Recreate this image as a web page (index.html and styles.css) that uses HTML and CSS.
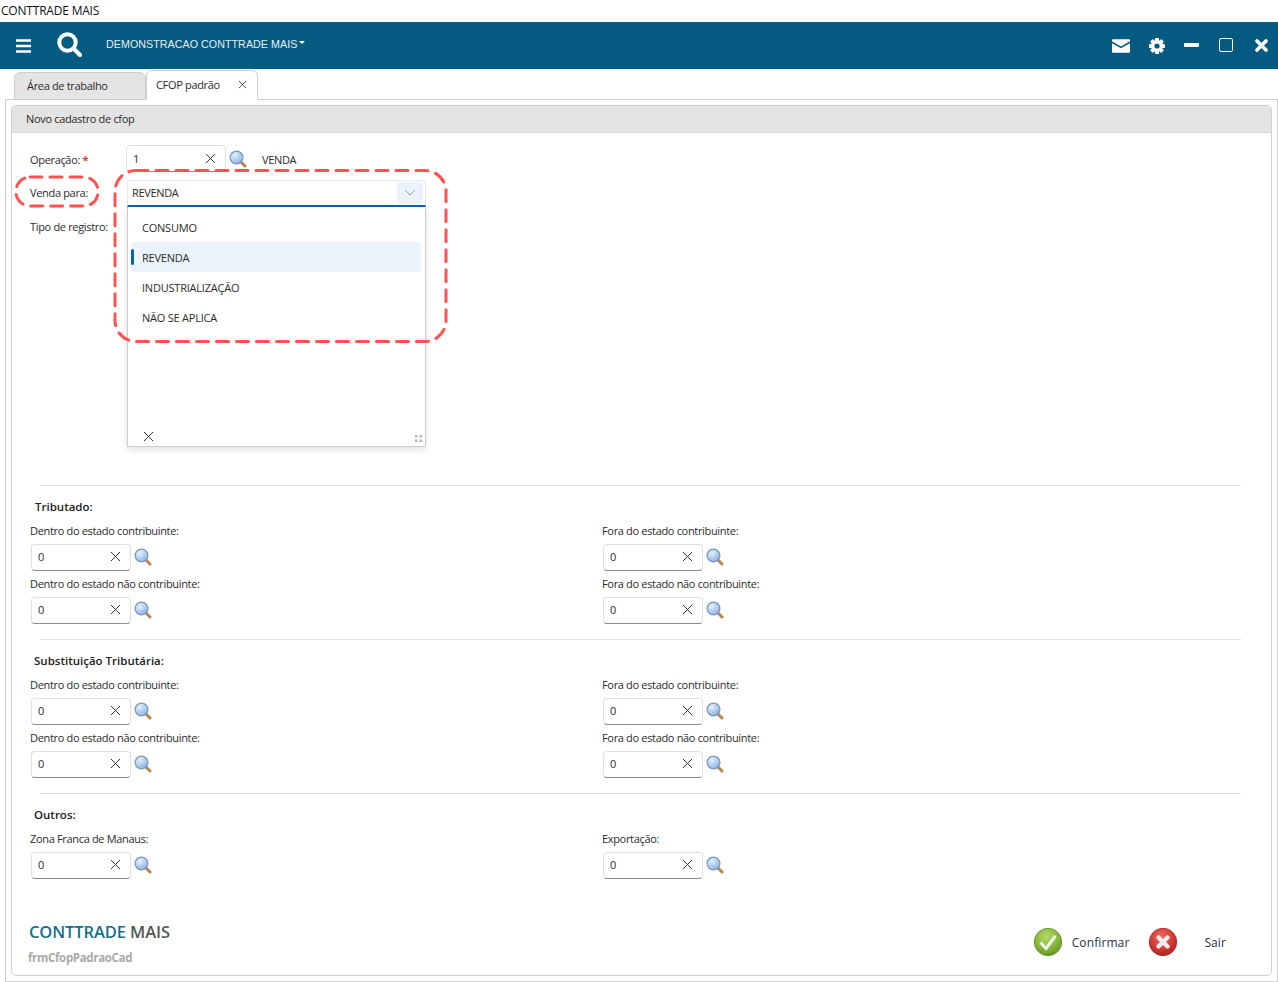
FILE: index.html
```html
<!DOCTYPE html>
<html lang="pt-BR">
<head>
<meta charset="utf-8">
<title>CONTTRADE MAIS</title>
<link rel="stylesheet" href="styles.css">
</head>
<body>
<svg class="defs" width="0" height="0" aria-hidden="true">
  <defs>
    <radialGradient id="glass" cx="40%" cy="35%" r="70%">
      <stop offset="0" stop-color="#e6f1fb"/>
      <stop offset="0.55" stop-color="#a9c9ec"/>
      <stop offset="1" stop-color="#5f8fd0"/>
    </radialGradient>
    <radialGradient id="green" cx="45%" cy="30%" r="75%">
      <stop offset="0" stop-color="#b5d86a"/>
      <stop offset="0.6" stop-color="#86b53a"/>
      <stop offset="1" stop-color="#5d8f24"/>
    </radialGradient>
    <radialGradient id="red" cx="45%" cy="30%" r="75%">
      <stop offset="0" stop-color="#ea6a60"/>
      <stop offset="0.6" stop-color="#cf3a33"/>
      <stop offset="1" stop-color="#a81f1c"/>
    </radialGradient>
    <symbol id="mag" viewBox="0 0 18 18">
      <path d="M11.5 11.5L16 16" stroke="#b9844f" stroke-width="3" stroke-linecap="round"/>
      <circle cx="7.5" cy="7.5" r="6.4" fill="url(#glass)" stroke="#7a99bf" stroke-width="1.2"/>
      <circle cx="7.5" cy="7.5" r="4.7" fill="none" stroke="#ffffff" stroke-opacity=".55" stroke-width=".8"/>
    </symbol>
    <symbol id="cross" viewBox="0 0 11 11">
      <path d="M1 1L10 10M10 1L1 10" stroke="#333333" stroke-width="1" fill="none"/>
    </symbol>
  </defs>
</svg>

<div class="titlebar">CONTTRADE MAIS</div>

<header class="navbar">
  <svg class="nav-burger" width="15" height="14" viewBox="0 0 15 14"><path d="M0 1.500H15M0 7H15M0 12.500H15" stroke="#fff" stroke-width="2.6"/></svg>
  <svg class="nav-search" width="25" height="25" viewBox="0 0 25 25"><circle cx="10.500" cy="10.500" r="8.200" fill="none" stroke="#fff" stroke-width="4"/><path d="M16.500 16.500L23 23" stroke="#fff" stroke-width="4.200" stroke-linecap="round"/></svg>
  <span class="nav-company">DEMONSTRACAO CONTTRADE MAIS</span>
  <span class="nav-caret"></span>
  <div class="nav-actions">
    <svg class="ico-mail" width="18" height="14" viewBox="0 0 19 14"><path d="M1 0H18A1 1 0 0 1 19 1V2L9.500 7.500L0 2V1A1 1 0 0 1 1 0ZM0 4L9.500 9.500L19 4V13A1 1 0 0 1 18 14H1A1 1 0 0 1 0 13Z" fill="#fff"/></svg>
    <svg class="ico-gear" width="16" height="16" viewBox="0 0 16 16"><g fill="#fff"><rect x="6" y="0" width="4" height="16" rx=".8"/><rect x="6" y="0" width="4" height="16" rx=".8" transform="rotate(45 8 8)"/><rect x="6" y="0" width="4" height="16" rx=".8" transform="rotate(90 8 8)"/><rect x="6" y="0" width="4" height="16" rx=".8" transform="rotate(135 8 8)"/><circle cx="8" cy="8" r="6"/></g><circle cx="8" cy="8" r="2.600" fill="#045a80"/></svg>
    <span class="ico-min"></span>
    <span class="ico-max"></span>
    <svg class="ico-close" width="13" height="13" viewBox="0 0 13 13"><path d="M2 2L11 11M11 2L2 11" stroke="#fff" stroke-width="3.600" stroke-linecap="round"/></svg>
  </div>
</header>

<nav class="tabs">
  <div class="tab tab-idle">Área de trabalho</div>
  <div class="tab tab-active"><span>CFOP padrão</span><svg class="tab-x" width="9" height="9"><use href="#cross"/></svg></div>
</nav>

<main class="outer">
  <section class="panel">
    <div class="panel-head">Novo cadastro de cfop</div>
    <div class="panel-body">
      <div class="top-form">
        <div class="top-row op-row">
          <label class="top-label">Operação: <span class="req">*</span></label>
          <div class="input op-input"><span>1</span><svg class="x" width="11" height="11"><use href="#cross"/></svg></div>
          <svg class="mag" width="18" height="18"><use href="#mag"/></svg>
          <span class="op-desc">VENDA</span>
        </div>
        <div class="top-row select-row">
          <label class="top-label">Venda para:</label>
          <div class="select">
            <span class="select-value">REVENDA</span>
            <span class="chev"><svg width="10" height="6" viewBox="0 0 10 6"><path d="M.5 .5L5 5L9.500 .5" fill="none" stroke="#8a9aa8"/></svg></span>
            <div class="popup">
              <ul class="options">
                <li class="option">CONSUMO</li>
                <li class="option selected">REVENDA</li>
                <li class="option">INDUSTRIALIZAÇÃO</li>
                <li class="option">NÃO SE APLICA</li>
              </ul>
              <div class="popup-foot">
                <svg class="popup-x" width="11" height="11"><use href="#cross"/></svg>
                <svg class="grip" width="7" height="7" viewBox="0 0 7 7"><path d="M0 0h2.500v2.500H0zM4.500 0H7v2.500H4.500zM0 4.500h2.500V7H0zM4.500 4.500H7V7H4.500z" fill="#b5b5b5"/></svg>
              </div>
            </div>
          </div>
        </div>
        <div class="top-row">
          <label class="top-label">Tipo de registro:</label>
        </div>
      </div>

      <hr class="rule first">
      <h3 class="sec-title tributado">Tributado:</h3>
      <div class="fields">
        <div class="field"><label>Dentro do estado contribuinte:</label><div class="field-line"><div class="input"><span>0</span><svg class="x" width="11" height="11"><use href="#cross"/></svg></div><svg class="mag" width="18" height="18"><use href="#mag"/></svg></div></div>
        <div class="field"><label>Fora do estado contribuinte:</label><div class="field-line"><div class="input"><span>0</span><svg class="x" width="11" height="11"><use href="#cross"/></svg></div><svg class="mag" width="18" height="18"><use href="#mag"/></svg></div></div>
        <div class="field"><label>Dentro do estado não contribuinte:</label><div class="field-line"><div class="input"><span>0</span><svg class="x" width="11" height="11"><use href="#cross"/></svg></div><svg class="mag" width="18" height="18"><use href="#mag"/></svg></div></div>
        <div class="field"><label>Fora do estado não contribuinte:</label><div class="field-line"><div class="input"><span>0</span><svg class="x" width="11" height="11"><use href="#cross"/></svg></div><svg class="mag" width="18" height="18"><use href="#mag"/></svg></div></div>
      </div>

      <hr class="rule">
      <h3 class="sec-title">Substituição Tributária:</h3>
      <div class="fields">
        <div class="field"><label>Dentro do estado contribuinte:</label><div class="field-line"><div class="input"><span>0</span><svg class="x" width="11" height="11"><use href="#cross"/></svg></div><svg class="mag" width="18" height="18"><use href="#mag"/></svg></div></div>
        <div class="field"><label>Fora do estado contribuinte:</label><div class="field-line"><div class="input"><span>0</span><svg class="x" width="11" height="11"><use href="#cross"/></svg></div><svg class="mag" width="18" height="18"><use href="#mag"/></svg></div></div>
        <div class="field"><label>Dentro do estado não contribuinte:</label><div class="field-line"><div class="input"><span>0</span><svg class="x" width="11" height="11"><use href="#cross"/></svg></div><svg class="mag" width="18" height="18"><use href="#mag"/></svg></div></div>
        <div class="field"><label>Fora do estado não contribuinte:</label><div class="field-line"><div class="input"><span>0</span><svg class="x" width="11" height="11"><use href="#cross"/></svg></div><svg class="mag" width="18" height="18"><use href="#mag"/></svg></div></div>
      </div>

      <hr class="rule">
      <h3 class="sec-title">Outros:</h3>
      <div class="fields">
        <div class="field"><label>Zona Franca de Manaus:</label><div class="field-line"><div class="input"><span>0</span><svg class="x" width="11" height="11"><use href="#cross"/></svg></div><svg class="mag" width="18" height="18"><use href="#mag"/></svg></div></div>
        <div class="field"><label>Exportação:</label><div class="field-line"><div class="input"><span>0</span><svg class="x" width="11" height="11"><use href="#cross"/></svg></div><svg class="mag" width="18" height="18"><use href="#mag"/></svg></div></div>
      </div>

      <footer class="foot">
        <div class="brand">
          <div class="logo"><span class="logo-a">CONTTRADE</span> <span class="logo-b">MAIS</span></div>
          <div class="form-name">frmCfopPadraoCad</div>
        </div>
        <div class="actions">
          <svg width="30" height="30" viewBox="0 0 30 30"><circle cx="15" cy="15" r="13.700" fill="url(#green)" stroke="#6d9a35"/><path d="M7.500 15.500L13 21.500L22.500 9" fill="none" stroke="#f3f6ee" stroke-width="3"/></svg>
          <span class="btn-confirm">Confirmar</span>
          <svg class="btn-x" width="30" height="30" viewBox="0 0 30 30"><circle cx="15" cy="15" r="13.700" fill="url(#red)" stroke="#b52b27"/><path d="M10.500 10.500L19.500 19.500M19.500 10.500L10.500 19.500" stroke="#f6ecec" stroke-width="4.400" stroke-linecap="round"/></svg>
          <span class="btn-exit">Sair</span>
        </div>
      </footer>
    </div>
  </section>
</main>

<svg class="marks" width="1278" height="982" viewBox="0 0 1278 982" aria-hidden="true">
  <rect x="16" y="177" width="82" height="29" rx="14" class="mark"/>
  <rect x="115" y="170.500" width="331" height="171" rx="21" class="mark"/>
</svg>
</body>
</html>
```
FILE: styles.css
```css
* { box-sizing: border-box; }
html, body { margin: 0; padding: 0; height: 982px; overflow: hidden; background: #fff; }
body {
  position: relative;
  font-family: "Open Sans", "Noto Sans", sans-serif;
  font-size: 11px;
  letter-spacing: -.33px;
  color: #2b2b2b;
}
.defs { position: absolute; }
.titlebar { height: 22px; line-height: 21px; padding-left: 1px; font-size: 12px; color: #111; letter-spacing: -.2px; }

.navbar { height: 47px; background: #045a80; display: flex; align-items: center; padding-left: 16px; color: #fff; }
.nav-burger { margin-top: 1px; }
.nav-search { margin-left: 26px; margin-right: 24px; margin-top: -2px; }
.nav-company { font-family: "Liberation Sans", Arial, sans-serif; font-size: 10.7px; letter-spacing: .05px; color: #e6eff4; margin-top: -3px; }
.nav-caret { width: 0; height: 0; margin-left: 2px; margin-top: -6px; border-left: 3px solid transparent; border-right: 3px solid transparent; border-top: 3px solid #fff; }
.nav-actions { margin-left: auto; display: flex; align-items: center; }
.ico-gear { margin-left: 19px; }
.ico-min { width: 15px; height: 4px; background: #fff; border-radius: 1px; margin-left: 19px; margin-top: -2px; }
.ico-max { width: 14px; height: 14px; border: 1.5px solid #fff; border-radius: 2px; margin-left: 20px; margin-top: -2px; }
.ico-close { margin-left: 22px; margin-right: 10px; }

.tabs { height: 31px; display: flex; align-items: flex-end; padding-left: 14px; position: relative; z-index: 1; margin-bottom: -1px; }
.tab { border: 1px solid #cfcfcf; border-radius: 6px 6px 0 0; display: flex; align-items: center; }
.tab-idle { width: 132px; height: 28px; background: #e4e4e4; padding-left: 12px; padding-bottom: 2px; }
.tab-active { width: 112px; height: 30px; background: #fff; border-bottom-color: #fff; padding-left: 9px; padding-bottom: 2px; }
.tab-x { margin-left: 18px; }

.outer { position: absolute; left: 5px; top: 99px; width: 1273px; height: 883px; border: 1px solid #cfcfcf; padding: 5px; }
.panel { width: 1261px; height: 871px; border: 1px solid #cfcfcf; border-radius: 5px; display: flex; flex-direction: column; }
.panel-head { height: 27px; background: #e4e4e4; border-bottom: 1px solid #d4d4d4; border-radius: 4px 4px 0 0; line-height: 26px; padding-left: 14px; flex: none; }
.panel-body { padding: 12px 0 0 18px; flex: 1; }

.top-form { height: 340px; display: flex; flex-direction: column; gap: 7px; }
.top-row { display: flex; align-items: center; height: 27px; }
.select-row { margin-top: 1px; }
.top-label { width: 96px; flex: none; margin-top: -2px; }
.op-row .top-label { margin-top: 2px; }
.req { color: #e03a3a; font-weight: 700; }
.input { width: 100px; height: 27px; border: 1px solid #e0e0e0; border-bottom-color: #8c8c8c; border-radius: 4px; background: #fff; display: flex; align-items: center; justify-content: space-between; padding: 0 9px 2px 6px; flex: none; }
.op-input { padding-bottom: 0; }
.x { flex: none; }
.mag { flex: none; margin-left: 3px; margin-top: -2px; }
.op-row .mag { margin-top: 0; }
.op-desc { margin-left: 15px; margin-top: 2px; }
.select { position: relative; width: 299px; height: 27px; margin-left: 1px; border: 1px solid #e6e6e6; border-bottom: 2px solid #0a62b5; border-radius: 4px 4px 0 0; display: flex; align-items: center; justify-content: space-between; padding: 0 2px 0 4px; background: #fff; }
.select-value { margin-top: -2px; }
.chev { width: 26px; height: 22px; background: #eaf3fb; border-radius: 3px; display: flex; align-items: center; justify-content: center; margin-top: -1px; }
.popup { position: absolute; left: -1px; top: 26px; width: 299px; height: 240px; background: #fff; border: 1px solid #cccccc; border-top: 0; box-shadow: 0 3px 7px rgba(0,0,0,.12); display: flex; flex-direction: column; z-index: 2; }
.options { list-style: none; margin: 5px 0 0; padding: 0 4px 0 3px; flex: 1; }
.option { height: 30px; line-height: 32px; padding-left: 11px; letter-spacing: -.22px; }
.option.selected { background: #ebf4fc; border-radius: 4px; position: relative; }
.option.selected::before { content: ""; position: absolute; left: 0; top: 7px; width: 3px; height: 16px; background: #0a62b5; border-radius: 2px; }
.popup-foot { height: 22px; flex: none; display: flex; align-items: center; justify-content: space-between; padding: 2px 3px 0 15px; }
.grip { margin-top: 5px; }

.rule { border: 0; height: 1px; background: #e2e2e2; margin: 0 0 0 10px; width: 1201px; }
.rule.first { margin-top: 0; }
.sec-title { margin: 11px 0 6px 4px; height: 20px; line-height: 20px; font-size: 11.5px; font-weight: 600; letter-spacing: 0; color: #222; }
.tributado { margin-left: 5px; }
.fields { display: grid; grid-template-columns: 572px 572px; row-gap: 5px; }
.fields + .rule { margin-top: 15px; }
.field label { display: block; height: 16px; line-height: 16px; margin-bottom: 5px; }
.field-line { display: flex; align-items: center; padding-left: 1px; }

.foot { display: flex; justify-content: space-between; margin-top: 41px; }
.brand { margin-left: -2px; }
.logo { font-size: 16.5px; font-weight: 600; line-height: 24px; letter-spacing: -.1px; padding-left: 1px; }
.logo-a { color: #12708f; }
.logo-b { color: #555; }
.form-name { margin-top: 6px; font-size: 11.5px; font-weight: 700; color: #a9a9a9; line-height: 16px; }
.actions { display: flex; align-items: center; height: 30px; margin-right: 45px; margin-top: 7px; font-size: 12px; letter-spacing: .1px; color: #26324a; }
.btn-confirm { margin-left: 9px; }
.btn-x { margin-left: 19px; }
.btn-exit { margin-left: 26px; }

.marks { position: absolute; left: 0; top: 0; pointer-events: none; z-index: 5; }
.mark { fill: none; stroke: #ff5353; stroke-width: 3; stroke-dasharray: 12 8; stroke-linecap: round; }
```
